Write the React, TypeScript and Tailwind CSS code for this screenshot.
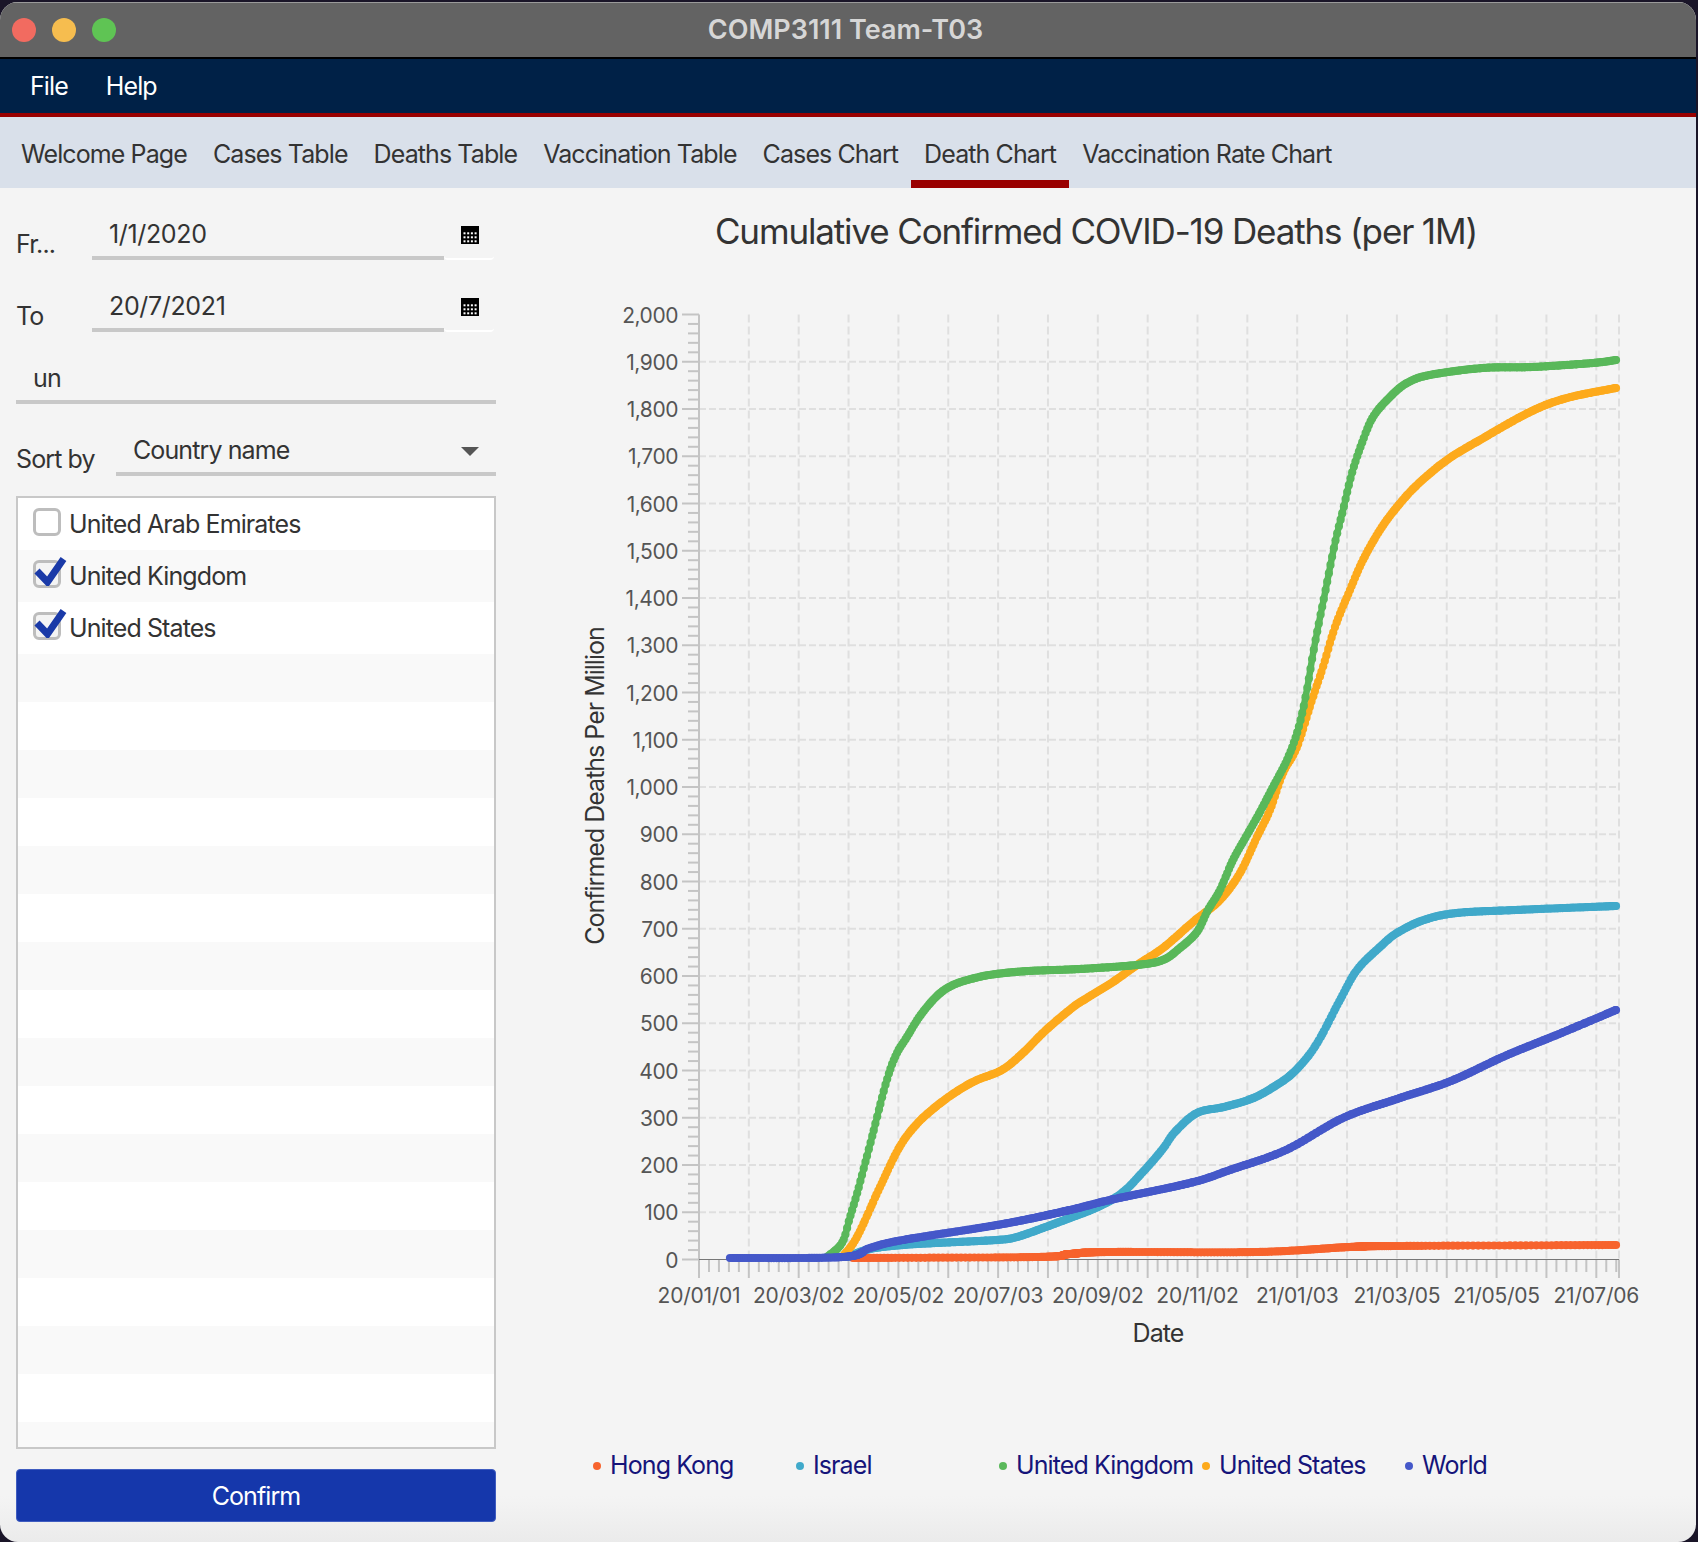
type Pt = [number, number];

const tabs = ["Welcome Page", "Cases Table", "Deaths Table", "Vaccination Table", "Cases Chart", "Death Chart", "Vaccination Rate Chart"];
const countries = [
  { name: "United Arab Emirates", checked: false },
  { name: "United Kingdom", checked: true },
  { name: "United States", checked: true },
];
const dates = ["20/01/01", "20/03/02", "20/05/02", "20/07/03", "20/09/02", "20/11/02", "21/01/03", "21/03/05", "21/05/05", "21/07/06"];

// chart geometry, in page pixels (the svg viewBox starts at 496,290)
const left = 699;
const right = 1619;
const top = 314.5;
const bottom = 1259.5;
const yStep = 47.25;
const xStep = 49.85;
const dayStep = 1.667;

const hongKong: Pt[] = [[853, 1258], [1037, 1257], [1070, 1254], [1110, 1252], [1258, 1252], [1350, 1247], [1398, 1246], [1616, 1245]];
const israel: Pt[] = [[847, 1257], [870, 1249], [903, 1245], [937, 1243], [997, 1240], [1017, 1237], [1043, 1228], [1070, 1218], [1098, 1207], [1122, 1193], [1142, 1173], [1162, 1150], [1175, 1132], [1197, 1113], [1224, 1107], [1251, 1099], [1272, 1088], [1294, 1072], [1316, 1045], [1340, 1000], [1357, 970], [1380, 947], [1397, 933], [1424, 920], [1457, 913], [1516, 910], [1616, 906]];
const unitedKingdom: Pt[] = [[827, 1257], [842, 1243], [850, 1217], [858, 1190], [872, 1137], [886, 1083], [896, 1055], [907, 1037], [920, 1016], [937, 996], [953, 985], [975, 978], [996, 974], [1029, 971], [1080, 969], [1137, 965], [1163, 960], [1180, 948], [1197, 932], [1208, 910], [1220, 890], [1233, 860], [1247, 835], [1260, 812], [1273, 787], [1287, 760], [1297, 733], [1305, 700], [1315, 643], [1325, 593], [1335, 543], [1343, 510], [1352, 473], [1362, 443], [1373, 417], [1390, 397], [1407, 383], [1430, 375], [1483, 368], [1533, 367], [1593, 363], [1616, 360]];
const unitedStates: Pt[] = [[843, 1256], [857, 1237], [880, 1187], [899, 1148], [915, 1126], [933, 1109], [953, 1094], [975, 1081], [1002, 1070], [1023, 1053], [1045, 1031], [1072, 1008], [1087, 998], [1113, 982], [1137, 965], [1163, 948], [1193, 922], [1220, 900], [1240, 873], [1257, 837], [1270, 810], [1283, 773], [1297, 747], [1312, 700], [1323, 667], [1335, 627], [1350, 590], [1363, 560], [1380, 530], [1397, 507], [1417, 485], [1447, 460], [1480, 440], [1530, 412], [1567, 398], [1616, 388]];
const world: Pt[] = [[730, 1258], [843, 1257], [870, 1248], [903, 1240], [1003, 1224], [1070, 1210], [1110, 1200], [1190, 1183], [1230, 1170], [1286, 1150], [1343, 1118], [1397, 1099], [1451, 1081], [1505, 1056], [1559, 1034], [1616, 1010]];

const series = [
  { name: "Hong Kong", color: "#f7632d", points: hongKong },
  { name: "Israel", color: "#40a9ca", points: israel },
  { name: "United States", color: "#fdaa1c", points: unitedStates },
  { name: "United Kingdom", color: "#59b85a", points: unitedKingdom },
  { name: "World", color: "#4558c9", points: world },
];
const legend = [series[0], series[1], series[3], series[2], series[4]];

// catmull-rom through the points, then one sample per day like the real data
function dailySamples(pts: Pt[]) {
  const out: Pt[] = [pts[0]];
  let nextX = pts[0][0] + dayStep;
  for (let i = 0; i < pts.length - 1; i++) {
    const p0 = pts[Math.max(i - 1, 0)];
    const p1 = pts[i];
    const p2 = pts[i + 1];
    const p3 = pts[Math.min(i + 2, pts.length - 1)];
    for (let t = 0; t <= 1; t += 0.02) {
      const x = 0.5 * (2 * p1[0] + (p2[0] - p0[0]) * t + (2 * p0[0] - 5 * p1[0] + 4 * p2[0] - p3[0]) * t * t + (3 * p1[0] - p0[0] - 3 * p2[0] + p3[0]) * t * t * t);
      const y = 0.5 * (2 * p1[1] + (p2[1] - p0[1]) * t + (2 * p0[1] - 5 * p1[1] + 4 * p2[1] - p3[1]) * t * t + (3 * p1[1] - p0[1] - 3 * p2[1] + p3[1]) * t * t * t);
      if (x >= nextX) {
        out.push([x, y]);
        nextX += dayStep;
      }
    }
  }
  out.push(pts[pts.length - 1]);
  return out;
}

function Line({ color, points }: { color: string; points: Pt[] }) {
  const samples = dailySamples(points);
  return (
    <g fill={color}>
      <polyline points={samples.map((p) => `${p[0].toFixed(1)},${p[1].toFixed(1)}`).join(" ")} fill="none" stroke={color} strokeWidth="6.500" strokeLinejoin="round" />
      {samples.map((p, i) => (
        <circle key={i} cx={p[0].toFixed(1)} cy={p[1].toFixed(1)} r="4.100" />
      ))}
    </g>
  );
}

function CalendarIcon() {
  const dots = [];
  for (let r = 0; r < 3; r++) {
    for (let c = 0; c < 4; c++) {
      dots.push(<rect key={`${r}-${c}`} x={2.5 + c * 3.7} y={6.3 + r * 4} width="2" height="2" fill="#fff" />);
    }
  }
  return (
    <svg width="18" height="18" viewBox="0 0 18 18">
      <rect width="18" height="18" fill="#000" />
      {dots}
    </svg>
  );
}

function DateField({ label, value }: { label: string; value: string }) {
  return (
    <div className="flex h-[46px] items-end">
      <span className="w-[76px] pb-[1px] leading-[30px]">{label}</span>
      <div className="flex h-full w-[352px] items-center border-b-4 border-[#c8c8c8] pl-[17px] tracking-[-0.35px]">{value}</div>
      <div className="flex h-full w-[50px] items-center justify-center rounded-b border-b-2 border-white pb-[2px] pl-[2px]">
        <CalendarIcon />
      </div>
    </div>
  );
}

function CheckRow({ name, checked, striped }: { name: string; checked: boolean; striped: boolean }) {
  return (
    <div className={`relative flex h-[52px] items-center pl-[15px] ${striped ? "bg-[#f9f9f9]" : "bg-white"}`}>
      <div className={`mb-[5px] h-[28px] w-[28px] rounded-[6px] border-[3px] border-[#bdbdbd] ${checked ? "bg-[#f4f4f4]" : "bg-white"}`} />
      <span className="ml-[8px] pt-[2px]">{name}</span>
      {checked && (
        <svg className="absolute left-[15px] top-[4px]" width="34" height="32" viewBox="0 0 34 32">
          <path d="M4 17 L14.500 28 L30.500 5" fill="none" stroke="#1a3aa8" strokeWidth="7" />
        </svg>
      )}
    </div>
  );
}

function Chart() {
  const hGrid = [];
  const yTicks = [];
  for (let i = 0; i <= 20; i++) {
    const y = bottom - i * yStep;
    if (i > 0 && i < 20) hGrid.push(<line key={i} x1={left} x2={right} y1={y} y2={y} />);
    yTicks.push(<line key={i} x1={682} x2={left} y1={y} y2={y} />);
  }
  const yMinor = [];
  for (let i = 0; i < 100; i++) {
    if (i % 5 === 0) continue;
    const y = bottom - i * (yStep / 5);
    yMinor.push(<line key={i} x1={688} x2={left} y1={y} y2={y} />);
  }
  const vGrid = [];
  const xTicks = [];
  for (let i = 0; i <= 18; i++) {
    const x = left + i * xStep;
    if (i > 0) vGrid.push(<line key={i} x1={x} x2={x} y1={top} y2={bottom} />);
    xTicks.push(<line key={i} x1={x} x2={x} y1={bottom} y2={1278} />);
  }
  const xMinor = [];
  for (let i = 0; i < 93; i++) {
    if (i % 5 === 0) continue;
    const x = left + i * (xStep / 5);
    if (x < right) xMinor.push(<line key={i} x1={x} x2={x} y1={bottom} y2={1272} />);
  }

  return (
    <svg width="1200" height="1060" viewBox="496 290 1200 1060" className="block">
      <g stroke="#dfdfdf" strokeWidth="2" strokeDasharray="7 3">
        {hGrid}
      </g>
      <g stroke="#dfdfdf" strokeWidth="2" strokeDasharray="8 4">
        {vGrid}
        <line x1={right} x2={right} y1={top} y2={bottom} />
      </g>
      <g stroke="#c4c4c4" strokeWidth="2">
        {yTicks}
        {yMinor}
        {xTicks}
        {xMinor}
        <line x1={right} x2={right} y1={bottom} y2={1278} />
        <line x1={left} x2={left} y1={top} y2={1278} />
      </g>
      <line x1={left} x2={right} y1={bottom} y2={bottom} stroke="#777" strokeWidth="1" />
      {series.map((s) => (
        <Line key={s.name} color={s.color} points={s.points} />
      ))}
      <g fill="#555" fontSize="21" textAnchor="end" className="tracking-[-0.45px]">
        {Array.from({ length: 21 }, (_, i) => (
          <text key={i} x={678} y={bottom - i * yStep + 8}>
            {(i * 100).toLocaleString("en-US")}
          </text>
        ))}
      </g>
      <g fill="#555" fontSize="21" textAnchor="middle" className="tracking-[-0.25px]">
        {dates.map((d, i) => (
          <text key={d} x={left + i * 2 * xStep} y={1303}>
            {d}
          </text>
        ))}
      </g>
      <text x={1158} y={1342} fill="#333" fontSize="25" textAnchor="middle">Date</text>
      <text transform="translate(604 786) rotate(-90)" fill="#333" fontSize="25" textAnchor="middle" className="tracking-[-1px]">Confirmed Deaths Per Million</text>
    </svg>
  );
}

export default function App() {
  return (
    <div className="h-[1542px] w-full overflow-hidden bg-[#1a1528] pt-[2px] font-['Inter',sans-serif] text-[25px] tracking-[-0.9px] text-[#333]">
      <div className="flex h-[1540px] w-[1696px] flex-col overflow-hidden rounded-[18px] bg-[linear-gradient(to_bottom,#f4f4f4_97%,#ebebeb)]">
        <div className="flex h-[57px] shrink-0 items-center border-t border-[#9a9a9a] border-b-2 border-b-black bg-[#636363]">
          <div className="relative flex w-full items-center justify-center pr-[5px]">
            <div className="absolute left-[12px] flex gap-[16px]">
              <span className="h-[24px] w-[24px] rounded-full bg-[#f26b60]" />
              <span className="h-[24px] w-[24px] rounded-full bg-[#f6bd4f]" />
              <span className="h-[24px] w-[24px] rounded-full bg-[#5fc454]" />
            </div>
            <span className="text-[27px] font-semibold tracking-normal text-[#d6d6d6]">COMP3111 Team-T03</span>
          </div>
        </div>
        <div className="flex h-[58px] shrink-0 items-center gap-[38px] border-b-4 border-[#990000] bg-[#002147] pl-[30px] pt-[2px] text-white">
          <span>File</span>
          <span>Help</span>
        </div>
        <div className="flex h-[71px] shrink-0 bg-[#d9e0ea] pl-[8px]">
          {tabs.map((t) => (
            <div key={t} className={`flex items-center border-b-[8px] px-[13px] pt-[12px] ${t === "Death Chart" ? "border-[#990000]" : "border-transparent"}`}>
              {t}
            </div>
          ))}
        </div>
        <div className="flex min-h-0 flex-1">
          <aside className="flex w-[496px] shrink-0 flex-col pl-[16px] pt-[26px]">
            <DateField label="Fr..." value="1/1/2020" />
            <div className="mt-[26px]">
              <DateField label="To" value="20/7/2021" />
            </div>
            <div className="mt-[26px] flex h-[46px] items-center border-b-4 border-[#c8c8c8] pl-[17px]">un</div>
            <div className="mt-[26px] flex h-[46px] items-end">
              <span className="w-[100px] pb-[2px] leading-[30px]">Sort by</span>
              <div className="flex h-full flex-1 items-center border-b-4 border-[#c8c8c8] pl-[17px] pr-[17px]">
                <span className="flex-1">Country name</span>
                <svg width="18" height="9" viewBox="0 0 18 9">
                  <path d="M0 0 H18 L9 9 Z" fill="#555" />
                </svg>
              </div>
            </div>
            <div className="mt-[20px] h-[953px] overflow-hidden border-2 border-[#c8c8c8] bg-white">
              {countries.map((c, i) => (
                <CheckRow key={c.name} name={c.name} checked={c.checked} striped={i % 2 === 1} />
              ))}
              {Array.from({ length: 17 }, (_, i) => (
                <div key={i} className={`h-[48px] ${i % 2 === 0 ? "bg-[#f9f9f9]" : "bg-white"}`} />
              ))}
            </div>
            <button className="mt-[20px] h-[53px] shrink-0 rounded-[4px] border border-[#3f5cc0] bg-[#1537ab] pt-[2px] text-white">Confirm</button>
          </aside>
          <main className="flex flex-1 flex-col">
            <h1 className="flex h-[102px] items-center justify-center pb-[16px] text-[35px] font-normal tracking-[-1.15px]">Cumulative Confirmed COVID-19 Deaths (per 1M)</h1>
            <Chart />
            <div className="mt-[97px] grid grid-cols-[repeat(5,203px)] whitespace-nowrap pl-[97px] text-[#15147a]">
              {legend.map((s) => (
                <div key={s.name} className="flex items-center">
                  <span className="mr-[9px] h-[8px] w-[8px] rounded-full" style={{ backgroundColor: s.color }} />
                  {s.name}
                </div>
              ))}
            </div>
          </main>
        </div>
      </div>
    </div>
  );
}
